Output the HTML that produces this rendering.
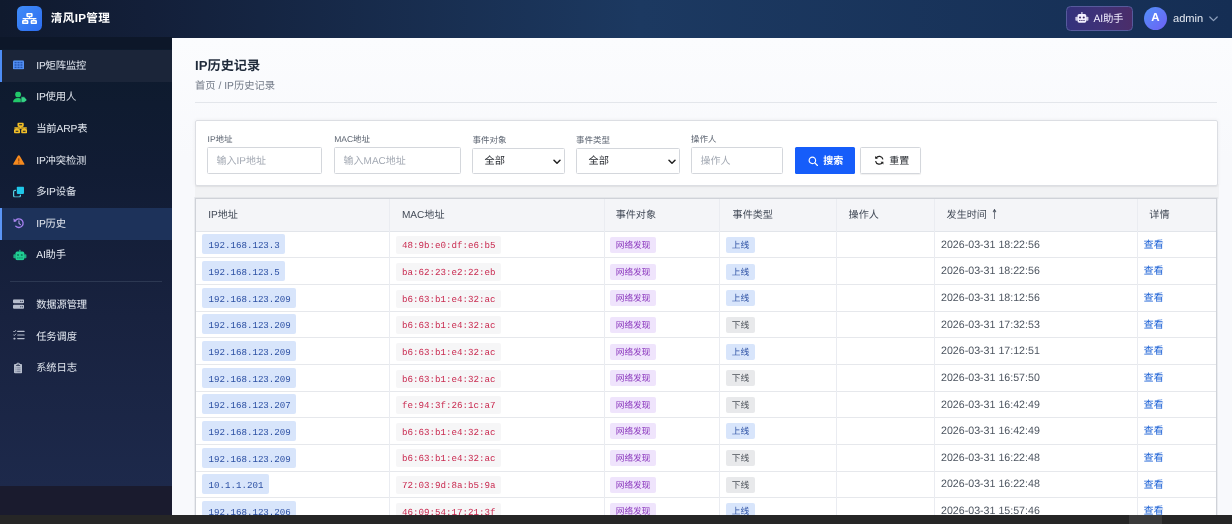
<!DOCTYPE html>
<html lang="zh-CN">
<head>
<meta charset="utf-8">
<title>清风IP管理 - IP历史记录</title>
<style>
*{box-sizing:border-box;margin:0;padding:0}
html,body{width:1232px;height:524px;overflow:hidden}
body{position:relative;background:#f8f9fc;font-family:"Liberation Sans","Noto Sans CJK SC",sans-serif;color:#1f2937;-webkit-font-smoothing:antialiased;text-rendering:geometricPrecision;will-change:transform}
.abs{position:absolute}
#hdr{position:absolute;left:0;top:0;width:1232px;height:37.8px;background:linear-gradient(90deg,#101a2e 0%,#131f39 12%,#1c3961 52%,#152e54 100%)}
#logo{position:absolute;left:17px;top:5.5px;width:25.3px;height:25.4px;border-radius:5.5px;background:linear-gradient(135deg,#3f8cf8 0%,#2d6df0 100%);display:flex;align-items:center;justify-content:center}
#brand{position:absolute;left:50.8px;top:9.5px;font-size:11.6px;line-height:18px;font-weight:bold;color:#fff;letter-spacing:.35px;white-space:nowrap}
#aibtn{position:absolute;left:1065.9px;top:6.1px;width:66.9px;height:24.9px;border-radius:4.5px;border:1px solid #575a9c;background:linear-gradient(90deg,#34317c 0%,#3f3278 50%,#4b2d69 100%)}
#aibtn .ic{position:absolute;left:8.200px;top:4.700px;line-height:0}
#aibtn .tx{position:absolute;left:26.600px;top:3.600px;font-size:10.4px;line-height:17px;color:#f1eeff;white-space:nowrap;letter-spacing:-.2px}
#avatar{position:absolute;left:1143.8px;top:7px;width:23.3px;height:23.3px;border-radius:50%;background:linear-gradient(135deg,#5291fa 0%,#6e60f3 100%);color:#fff;font-weight:bold;font-size:11.500px;line-height:23.3px;text-align:center}
#uname{position:absolute;left:1173px;top:9.5px;font-size:11.1px;line-height:18px;color:#e6ebf3;white-space:nowrap}
#chev{position:absolute;left:1209.3px;top:15.6px;line-height:0}
#side{position:absolute;left:0;top:37px;width:171.8px;height:450px;background:linear-gradient(180deg,#0d1a2c 0%,#111c34 30%,#18223f 62%,#1d294b 100%)}
#side .topband{position:absolute;left:0;top:0;width:100%;height:12.4px;background:#0d1729}
#sidebot{position:absolute;left:0;top:486.4px;width:171.8px;height:30px;background:#1a1b2e}
#taskbar{z-index:10;position:absolute;left:0;top:515.2px;width:1232px;height:9px;background:#262626}
#taskbar i{position:absolute;left:1129px;top:0;width:33px;height:9px;background:#3a3a3a}
.mi{position:absolute;left:0;width:171.8px;height:31.6px;color:#e3e8f0;font-size:10.300px;white-space:nowrap}
.mi.hover{background:#1b2539;border-left:2px solid #4d8df6}
.mi.active{background:#1d325a;border-left:2.2px solid #5b96f7}
.mi .ic{position:absolute;left:0;top:0;width:0;height:0}
.mi .ic svg{position:absolute;transform:translate(0,-50%);left:13px;top:14.900px}
.mi.hover .ic svg,.mi.active .ic svg{left:11px}
.mi .tx{position:absolute;left:36.2px;top:7.700px;line-height:18px;letter-spacing:-.15px}
.mi.hover .tx,.mi.active .tx{left:34.2px}
.mi.clipi .ic svg{left:13.600px}
.mi.clonei .ic svg{top:15.200px}
.mi.tasksi .ic svg{top:14.300px}
.sep{position:absolute;left:10.300px;width:151.700px;height:1px;background:#2c3852}
#title{position:absolute;left:195px;top:56px;font-size:13.200px;line-height:20px;font-weight:bold;color:#1f2a3a;white-space:nowrap}
#crumb{position:absolute;left:195px;top:78.900px;font-size:10.300px;line-height:16px;color:#727a87;white-space:nowrap}
#hr{position:absolute;left:195px;top:102px;width:1022px;height:1px;background:#e3e6eb}
#filter{position:absolute;left:195px;top:120px;width:1023px;height:66px;background:#fff;border:1px solid #dcdee3;border-radius:2px;box-shadow:0 0 4px rgba(0,0,0,.06),0 1px 1px rgba(0,0,0,.05)}
.lb{position:absolute;font-size:8.500px;line-height:12px;color:#5b6370;white-space:nowrap}
.inp{position:absolute;height:27px;border:1px solid #d4d7dc;border-radius:1.500px;background:#fff;font-size:10px;color:#a3a9b3;line-height:27.400px;padding-left:8.600px;white-space:nowrap;overflow:hidden}
.sel{position:absolute;height:26px;border:1px solid #d4d7dc;border-radius:1.500px;background:#fff;font-size:10.200px;color:#1f2329;line-height:25.800px;padding-left:11.500px;white-space:nowrap}
.sel svg{position:absolute;right:2.600px;top:9.600px}
.btn{position:absolute;height:26.800px;border-radius:1.500px;font-size:10px;white-space:nowrap}
#bsearch{left:795px;top:147px;width:60px;height:27px;background:#165dfa;color:#fff;font-weight:bold}
#breset{left:860px;top:147px;width:61px;height:27px;background:#fff;border:1px solid #d4d7dc;color:#1f2329;box-shadow:0 1px 1px rgba(0,0,0,.06)}
.btn svg{position:absolute}
.btn span{position:absolute;line-height:16px}
#tbl{position:absolute;left:195px;top:198px;width:1022px;height:330px;background:#fff;border:1px solid #cfd2d8;box-shadow:0 0 0 1px rgba(120,125,135,.10);overflow:hidden}
.vl{position:absolute;top:0;width:1px;height:330px;background:#eaecf1;z-index:2}
.thead{position:absolute;left:0;top:0;width:1021px;height:33px;background:#f4f5f8;border-bottom:1px solid #e2e5ea}
.hl{position:absolute;left:0;width:1021px;height:1px;background:#e6e8ec}
.th{position:absolute;top:8.500px;font-size:10.100px;line-height:16px;color:#424a57;white-space:nowrap}
.arr{position:absolute;left:44.800px;top:-.400px;font-size:13.500px;line-height:16px;font-family:"DejaVu Sans","Liberation Sans",sans-serif;transform:scaleX(.62);transform-origin:0 0}
.tr{position:absolute;left:0;width:1021px;height:26.64px}
.tr span,.tr a{position:absolute;white-space:nowrap}
.ip{left:6.30px;top:3.100px;height:20px;line-height:23.400px;padding:0 5.200px 0 6.300px;background:#d8e5fb;color:#2b4fa3;font-family:"Liberation Mono","DejaVu Sans Mono",monospace;font-size:9.150px;border-radius:2px}
.mac{left:200.00px;top:5px;height:18px;line-height:19.400px;padding:0 5.300px 0 5.900px;background:#f6f6f7;color:#c92a50;font-family:"Liberation Mono","DejaVu Sans Mono",monospace;font-size:9.200px;border-radius:2px}
.tg{top:5.700px;height:16px;line-height:17.400px;font-size:8.700px;border-radius:2px;padding:0 5.500px}
.obj{left:414.20px;background:#efe4fc;color:#8a35bd}
.up{left:530.30px;background:#d8e5fb;color:#2b4fa3}
.down{left:530.30px;background:#e8e9eb;color:#4a4f57}
.dt{left:745.00px;top:5.400px;line-height:16px;font-size:10.650px;color:#4d5560}
.lk{left:947.40px;top:6.500px;line-height:16px;font-size:10.200px;color:#1f63d6}
#mainbg{position:absolute;left:171.800px;top:37.800px;width:1061px;height:120px;background:linear-gradient(180deg,#fbfcfe 0%,#f8f9fc 100%)}
#strip{position:absolute;left:195px;top:184px;width:1023.500px;height:15px;background:#f1f2f4}
</style>
</head>
<body>
<div id="hdr">
  <div id="logo"><svg viewBox="0 0 20 15" width="15" height="11.200"><g fill="none" stroke="#fff" stroke-width="2.100"><rect x="6.800" y="1.050" width="6.400" height="3.600" rx=".5"/><rect x="1.050" y="10.300" width="6.400" height="3.600" rx=".5"/><rect x="12.550" y="10.300" width="6.400" height="3.600" rx=".5"/></g><path d="M10 5v2.600M.8 7.600h18.400M4.250 7.600v2.200M15.750 7.600v2.200" stroke="#fff" stroke-width="1.500" fill="none"/></svg></div>
  <div id="brand">清风IP管理</div>
  <div id="aibtn"><span class="ic"><svg viewBox="0 0 20 16" width="13.800" height="11"><g fill="#f3f0ff"><rect x="9.200" y="0" width="1.600" height="3.400" rx=".6"/><rect x="3.600" y="3" width="12.800" height="12.600" rx="2.400"/><rect x=".5" y="6.800" width="3.600" height="6" rx="1.200" opacity=".8"/><rect x="15.900" y="6.800" width="3.600" height="6" rx="1.200" opacity=".8"/></g><g fill="#3a2a64"><circle cx="7.300" cy="8" r="1.500"/><circle cx="12.700" cy="8" r="1.500"/><rect x="6" y="11.600" width="1.900" height="1.400"/><rect x="9.050" y="11.600" width="1.900" height="1.400"/><rect x="12.100" y="11.600" width="1.900" height="1.400"/></g></svg></span><span class="tx">AI助手</span></div>
  <div id="avatar">A</div>
  <div id="uname">admin</div>
  <div id="chev"><svg width="9" height="6" viewBox="0 0 9 6"><path d="M.8 1l3.700 3.700L8.200 1" fill="none" stroke="#8fa1bd" stroke-width="1.200" stroke-linecap="round" stroke-linejoin="round"/></svg></div>
</div>
<div id="side"><div class="topband"></div></div>
<div class="mi hover" style="top:50.20px"><span class="ic"><svg viewBox="0 0 11 9.400" width="11" height="9.400"><rect x="0" y="0" width="11" height="9.400" rx="1.500" fill="#5593f7"/><g fill="#2456b4"><rect x="1.5" y="1.55" width="2.1" height="1.5"/><rect x="4.45" y="1.55" width="2.1" height="1.5"/><rect x="7.4" y="1.55" width="2.1" height="1.5"/><rect x="1.5" y="3.95" width="2.1" height="1.5"/><rect x="4.45" y="3.95" width="2.1" height="1.5"/><rect x="7.4" y="3.95" width="2.1" height="1.5"/><rect x="1.5" y="6.35" width="2.1" height="1.5"/><rect x="4.45" y="6.35" width="2.1" height="1.5"/><rect x="7.4" y="6.35" width="2.1" height="1.5"/></g></svg></span><span class="tx">IP矩阵监控</span></div>
<div class="mi " style="top:81.80px"><span class="ic"><svg viewBox="0 0 13.800 11" width="13.800" height="11"><g fill="#22c86a"><circle cx="5.100" cy="2.900" r="2.900"/><path d="M0 10.900C0 8.100 1.900 6.500 5.100 6.500c1.300 0 2.300.2 3.100.7V10.900z"/></g><path d="M8.100 5.300h2.700c.4 0 .7.100.9.400l1.900 2.300c.3.300.3.800 0 1.100l-1.900 1.500c-.2.200-.5.300-.9.300H8.100z" fill="#35d486" stroke="#141d36" stroke-width=".5"/></svg></span><span class="tx">IP使用人</span></div>
<div class="mi " style="top:113.40px"><span class="ic"><svg viewBox="0 0 20 16" width="13.200" height="11.200" preserveAspectRatio="none" style="margin-left:.5px"><g fill="none" stroke="#f2bf27" stroke-width="2.5"><rect x="6.500" y="1.250" width="7" height="3.900" rx=".6"/><rect x="1.250" y="10.850" width="6.600" height="3.900" rx=".6"/><rect x="12.150" y="10.850" width="6.600" height="3.900" rx=".6"/></g><g stroke="#f2bf27" stroke-width="1.800" fill="none"><path d="M10 5.500v2.500M.6 8h18.800M4.500 8v2.500M15.500 8v2.500"/></g></svg></span><span class="tx">当前ARP表</span></div>
<div class="mi " style="top:145.00px"><span class="ic"><svg viewBox="0 0 18 16" width="11.600" height="10.500" style="margin-left:.2px"><path d="M9 .6c.6 0 1.100.3 1.400.9l7.200 12.400c.6 1-.1 2.100-1.400 2.100H1.800C.5 16-.2 14.900.4 13.900L7.600 1.500C7.900.9 8.400.6 9 .6z" fill="#f68a1e"/><rect x="8.150" y="5.200" width="1.700" height="5" rx=".8" fill="#8a3f10"/><circle cx="9" cy="12.700" r="1.050" fill="#8a3f10"/></svg></span><span class="tx">IP冲突检测</span></div>
<div class="mi clonei" style="top:176.60px"><span class="ic"><svg viewBox="0 0 11 11.200" width="11" height="11.200" style="margin-left:.3px"><rect x=".6" y="4" width="6.800" height="6.600" rx="1.300" fill="none" stroke="#56cfe0" stroke-width="1.200"/><rect x="3" y="0" width="8" height="8.300" fill="#131d37"/><rect x="3.800" y="0" width="7.200" height="7.500" rx="1" fill="#1fc7e8"/></svg></span><span class="tx">多IP设备</span></div>
<div class="mi active" style="top:208.20px"><span class="ic"><svg viewBox="0 0 16 16" width="11.500" height="11.500"><g fill="none" stroke="#a07deb" stroke-linecap="round" stroke-linejoin="round"><path d="M2.900 5.200A6 6 0 1 1 3.900 12.600" stroke-width="1.900"/><path d="M8.300 4.900v3.500l2 2" stroke-width="1.400" stroke="#b9a2f0"/></g><path d="M.5 1.900l.6 4.700 4.400-1.300z" fill="#a988ee"/></svg></span><span class="tx">IP历史</span></div>
<div class="mi " style="top:239.80px"><span class="ic"><svg viewBox="0 0 20 16" width="13.800" height="11"><g fill="#20cf94"><rect x="9.200" y="0" width="1.600" height="3.400" rx=".6"/><rect x="3.600" y="3" width="12.800" height="12.600" rx="2.400"/><rect x=".5" y="6.800" width="3.600" height="6" rx="1.200" opacity=".8"/><rect x="15.900" y="6.800" width="3.600" height="6" rx="1.200" opacity=".8"/></g><g fill="#0e7d5c"><circle cx="7.300" cy="8" r="1.500"/><circle cx="12.700" cy="8" r="1.500"/><rect x="6" y="11.600" width="1.900" height="1.400"/><rect x="9.050" y="11.600" width="1.900" height="1.400"/><rect x="12.100" y="11.600" width="1.900" height="1.400"/></g></svg></span><span class="tx">AI助手</span></div>
<div class="sep" style="top:281.00px"></div>
<div class="mi " style="top:289.50px"><span class="ic"><svg viewBox="0 0 16 14" width="11.200" height="9.400" preserveAspectRatio="none"><g fill="#b6bdcc"><rect x="0" y="0" width="16" height="5.800" rx="1.500"/><rect x="0" y="8.200" width="16" height="5.800" rx="1.500"/></g><g fill="#1a2440"><circle cx="11" cy="2.900" r=".9"/><circle cx="13.500" cy="2.900" r=".9"/><circle cx="11" cy="11.100" r=".9"/><circle cx="13.500" cy="11.100" r=".9"/></g></svg></span><span class="tx">数据源管理</span></div>
<div class="mi tasksi" style="top:321.10px"><span class="ic"><svg viewBox="0 0 16 14" width="11.500" height="10"><g stroke="#b6bdcc" stroke-width="1.600" fill="none" stroke-linecap="round"><path d="M6.500 2h9M6.500 7h9M6.500 12h9"/><path d="M.8 1.800l1 1 2-2.200M.8 6.800l1 1 2-2.200" stroke-width="1.300"/></g><rect x=".8" y="10.900" width="2.400" height="2.400" rx=".5" fill="#b6bdcc"/></svg></span><span class="tx">任务调度</span></div>
<div class="mi clipi" style="top:352.70px"><span class="ic"><svg viewBox="0 0 12 16" width="8.200" height="11.200"><path d="M1.600 2h1.900C3.700.9 4.700 0 6 0s2.300.9 2.500 2h1.900c.9 0 1.600.7 1.600 1.600v10.800c0 .9-.7 1.600-1.600 1.600H1.600C.7 16 0 15.300 0 14.400V3.600C0 2.700.7 2 1.600 2z" fill="#b6bdcc"/><circle cx="6" cy="2.400" r=".9" fill="#1a2440"/><rect x="3" y="3.800" width="6" height="1.300" rx=".5" fill="#1a2440"/><g fill="#6f7890"><rect x="2.300" y="7.200" width="1.300" height="1.300"/><rect x="4.600" y="7.200" width="5" height="1.300"/><rect x="2.300" y="10" width="1.300" height="1.300"/><rect x="4.600" y="10" width="5" height="1.300"/><rect x="2.300" y="12.700" width="1.300" height="1.300"/><rect x="4.600" y="12.700" width="5" height="1.300"/></g></svg></span><span class="tx">系统日志</span></div>
<div id="sidebot"></div>

<div id="mainbg"></div>
<div id="title">IP历史记录</div>
<div id="crumb">首页 / IP历史记录</div>
<div id="hr"></div>

<div id="strip"></div>
<div id="filter"></div>
<span class="lb" style="left:207.600px;top:132.700px">IP地址</span>
<div class="inp" style="left:207px;top:147px;width:115px">输入IP地址</div>
<span class="lb" style="left:334.200px;top:132.700px">MAC地址</span>
<div class="inp" style="left:334px;top:147px;width:127px">输入MAC地址</div>
<span class="lb" style="left:472.400px;top:133.700px">事件对象</span>
<div class="sel" style="left:472px;top:148px;width:93px">全部<svg width="8" height="6" viewBox="0 0 8 6"><path d="M1 1.200l3 3 3-3" fill="none" stroke="#222" stroke-width="1.500" stroke-linecap="round" stroke-linejoin="round"/></svg></div>
<span class="lb" style="left:576px;top:133.700px">事件类型</span>
<div class="sel" style="left:576px;top:148px;width:104px">全部<svg width="8" height="6" viewBox="0 0 8 6"><path d="M1 1.200l3 3 3-3" fill="none" stroke="#222" stroke-width="1.500" stroke-linecap="round" stroke-linejoin="round"/></svg></div>
<span class="lb" style="left:691px;top:132.700px">操作人</span>
<div class="inp" style="left:691px;top:147px;width:92px">操作人</div>
<div class="btn" id="bsearch"><svg style="left:12.500px;top:9px" width="10.500" height="10.500" viewBox="0 0 12 12"><circle cx="5" cy="5" r="3.700" fill="none" stroke="#fff" stroke-width="1.300"/><path d="M7.800 7.800l3 3" stroke="#fff" stroke-width="1.400" stroke-linecap="round"/></svg><span style="left:28.300px;top:7.400px">搜索</span></div>
<div class="btn" id="breset"><svg style="left:13px;top:7.400px" width="10.500" height="10.500" viewBox="0 0 12 12"><g fill="none" stroke="#222" stroke-width="1.400"><path d="M10.200 5A4.300 4.300 0 0 0 2.300 3.600"/><path d="M1.800 7A4.300 4.300 0 0 0 9.700 8.400"/></g><path d="M1.300 1.200v3.200h3.200z" fill="#222"/><path d="M10.700 10.800V7.600H7.500z" fill="#222"/></svg><span style="left:28.200px;top:6.400px">重置</span></div>

<div id="tbl">
<div class="vl" style="left:193.00px"></div>
<div class="vl" style="left:407.50px"></div>
<div class="vl" style="left:523.00px"></div>
<div class="vl" style="left:640.00px"></div>
<div class="vl" style="left:738.00px"></div>
<div class="vl" style="left:941.00px"></div>
<div class="thead">
<span class="th" style="left:12.20px">IP地址</span>
<span class="th" style="left:205.90px">MAC地址</span>
<span class="th" style="left:419.70px">事件对象</span>
<span class="th" style="left:536.60px">事件类型</span>
<span class="th" style="left:652.60px">操作人</span>
<span class="th" style="left:750.60px">发生时间<span class="arr">↑</span></span>
<span class="th" style="left:953.30px">详情</span>
</div>
<div class="hl" style="top:58px"></div>
<div class="tr" style="top:32.30px"><span class="ip">192.168.123.3</span><span class="mac">48:9b:e0:df:e6:b5</span><span class="tg obj">网络发现</span><span class="tg up">上线</span><span class="dt">2026-03-31 18:22:56</span><a class="lk">查看</a></div>
<div class="hl" style="top:85px"></div>
<div class="tr" style="top:58.94px"><span class="ip">192.168.123.5</span><span class="mac">ba:62:23:e2:22:eb</span><span class="tg obj">网络发现</span><span class="tg up">上线</span><span class="dt">2026-03-31 18:22:56</span><a class="lk">查看</a></div>
<div class="hl" style="top:112px"></div>
<div class="tr" style="top:85.58px"><span class="ip">192.168.123.209</span><span class="mac">b6:63:b1:e4:32:ac</span><span class="tg obj">网络发现</span><span class="tg up">上线</span><span class="dt">2026-03-31 18:12:56</span><a class="lk">查看</a></div>
<div class="hl" style="top:138px"></div>
<div class="tr" style="top:112.22px"><span class="ip">192.168.123.209</span><span class="mac">b6:63:b1:e4:32:ac</span><span class="tg obj">网络发现</span><span class="tg down">下线</span><span class="dt">2026-03-31 17:32:53</span><a class="lk">查看</a></div>
<div class="hl" style="top:165px"></div>
<div class="tr" style="top:138.86px"><span class="ip">192.168.123.209</span><span class="mac">b6:63:b1:e4:32:ac</span><span class="tg obj">网络发现</span><span class="tg up">上线</span><span class="dt">2026-03-31 17:12:51</span><a class="lk">查看</a></div>
<div class="hl" style="top:192px"></div>
<div class="tr" style="top:165.50px"><span class="ip">192.168.123.209</span><span class="mac">b6:63:b1:e4:32:ac</span><span class="tg obj">网络发现</span><span class="tg down">下线</span><span class="dt">2026-03-31 16:57:50</span><a class="lk">查看</a></div>
<div class="hl" style="top:218px"></div>
<div class="tr" style="top:192.14px"><span class="ip">192.168.123.207</span><span class="mac">fe:94:3f:26:1c:a7</span><span class="tg obj">网络发现</span><span class="tg down">下线</span><span class="dt">2026-03-31 16:42:49</span><a class="lk">查看</a></div>
<div class="hl" style="top:245px"></div>
<div class="tr" style="top:218.78px"><span class="ip">192.168.123.209</span><span class="mac">b6:63:b1:e4:32:ac</span><span class="tg obj">网络发现</span><span class="tg up">上线</span><span class="dt">2026-03-31 16:42:49</span><a class="lk">查看</a></div>
<div class="hl" style="top:272px"></div>
<div class="tr" style="top:245.42px"><span class="ip">192.168.123.209</span><span class="mac">b6:63:b1:e4:32:ac</span><span class="tg obj">网络发现</span><span class="tg down">下线</span><span class="dt">2026-03-31 16:22:48</span><a class="lk">查看</a></div>
<div class="hl" style="top:298px"></div>
<div class="tr" style="top:272.06px"><span class="ip">10.1.1.201</span><span class="mac">72:03:9d:8a:b5:9a</span><span class="tg obj">网络发现</span><span class="tg down">下线</span><span class="dt">2026-03-31 16:22:48</span><a class="lk">查看</a></div>
<div class="hl" style="top:325px"></div>
<div class="tr" style="top:298.70px"><span class="ip">192.168.123.206</span><span class="mac">46:09:54:17:21:3f</span><span class="tg obj">网络发现</span><span class="tg up">上线</span><span class="dt">2026-03-31 15:57:46</span><a class="lk">查看</a></div>
</div>
<div id="taskbar"><i></i></div>
</body>
</html>
